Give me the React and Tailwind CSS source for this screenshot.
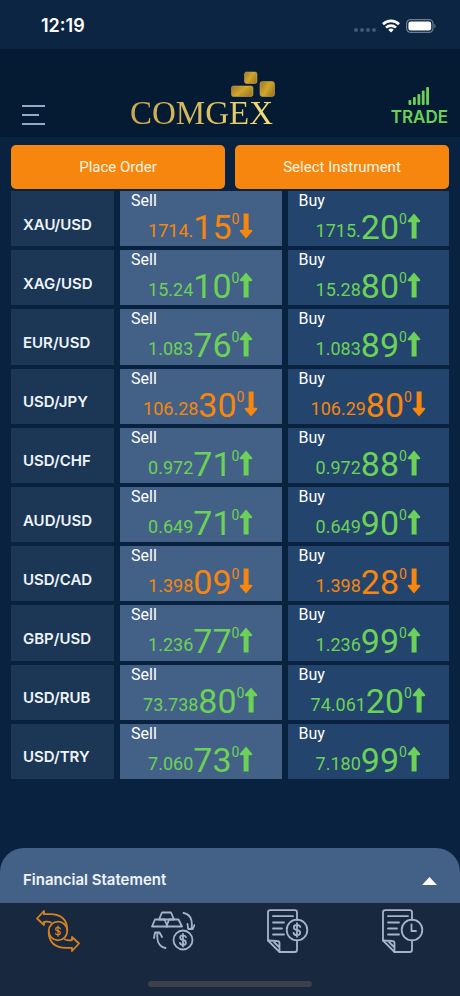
import { useState } from "react"

const quotes = [
    { pair: "XAU/USD", sell: ["1714.", "15", "down"], buy: ["1715.", "20", "up"] },
    { pair: "XAG/USD", sell: ["15.24", "10", "up"], buy: ["15.28", "80", "up"] },
    { pair: "EUR/USD", sell: ["1.083", "76", "up"], buy: ["1.083", "89", "up"] },
    { pair: "USD/JPY", sell: ["106.28", "30", "down"], buy: ["106.29", "80", "down"] },
    { pair: "USD/CHF", sell: ["0.972", "71", "up"], buy: ["0.972", "88", "up"] },
    { pair: "AUD/USD", sell: ["0.649", "71", "up"], buy: ["0.649", "90", "up"] },
    { pair: "USD/CAD", sell: ["1.398", "09", "down"], buy: ["1.398", "28", "down"] },
    { pair: "GBP/USD", sell: ["1.236", "77", "up"], buy: ["1.236", "99", "up"] },
    { pair: "USD/RUB", sell: ["73.738", "80", "up"], buy: ["74.061", "20", "up"] },
    { pair: "USD/TRY", sell: ["7.060", "73", "up"], buy: ["7.180", "99", "up"] },
]

function StatusBar() {
    return (
        <div className="flex h-[49px] items-center justify-between bg-[#0c2542] pt-[2px] pr-6 pl-[41px] text-white">
            <span className="font-['Inter',sans-serif] text-lg leading-6 font-semibold">12:19</span>
            <div className="flex items-center gap-[6px]">
                <svg className="mt-2 h-1 w-[22px] fill-[#44597a]" viewBox="0 0 22 4">
                    <circle cx="2" cy="2" r="2" />
                    <circle cx="8" cy="2" r="2" />
                    <circle cx="14" cy="2" r="2" />
                    <circle cx="20" cy="2" r="2" />
                </svg>
                <svg className="h-[14px] w-[18px]" viewBox="0 0 18 14" fill="none" stroke="white" strokeWidth="2.6">
                    <path d="M1 5.2a11.4 11.4 0 0 1 16 0" />
                    <path d="M4 8.6a7.2 7.2 0 0 1 10 0" />
                    <path d="M9 13.6 6.3 10.8a4 4 0 0 1 5.4 0Z" fill="white" stroke="none" />
                </svg>
                <svg className="h-[14px] w-[30px]" viewBox="0 0 30 14" fill="none">
                    <rect x="0.6" y="0.6" width="26.4" height="12.8" rx="4" stroke="#6d7d92" strokeWidth="1.2" />
                    <rect x="2.4" y="2.4" width="22.8" height="9.2" rx="2.4" fill="white" />
                    <path d="M28.4 4.8c1.6.7 1.6 3.7 0 4.4Z" fill="#6d7d92" />
                </svg>
            </div>
        </div>
    )
}

function Logo() {
    return (
        <div className="flex flex-col items-end justify-self-start">
            <svg className="-mr-[2px] h-[26px] w-11" viewBox="0 0 44 26">
                <defs>
                    <linearGradient id="gold" x1="0" y1="0" x2="1" y2="0.6">
                        <stop offset="0" stopColor="#9c7426" />
                        <stop offset="0.55" stopColor="#d0a62c" />
                        <stop offset="1" stopColor="#a87f22" />
                    </linearGradient>
                </defs>
                <g fill="url(#gold)" stroke="#d5b455" strokeWidth="0.5">
                    <rect x="13.5" y="1" width="12.5" height="11.5" rx="2" />
                    <rect x="0.5" y="15" width="21.5" height="10.5" rx="2" />
                    <rect x="29" y="10.5" width="14.5" height="15" rx="2.5" />
                </g>
            </svg>
            <h1 className="bg-linear-to-r from-[#c9a750] via-[#d9bd5c] to-[#f3e07a] bg-clip-text font-['Liberation_Serif',serif] text-[33px] leading-8 text-transparent">
                COMGEX
            </h1>
        </div>
    )
}

function Header() {
    return (
        <header className="grid h-[88px] grid-cols-[118px_1fr_auto] items-end bg-[#051b33] px-3 pb-2">
            <button aria-label="Menu" className="mb-[3px] ml-[10px] w-6">
                <svg className="h-[22px] w-6" viewBox="0 0 24 22" stroke="#96a8c6" strokeWidth="2">
                    <path d="M0 2h23M0 11h17M0 20h23" />
                </svg>
            </button>
            <Logo />
            <div className="flex flex-col items-center text-[#6cd158]">
                <svg className="h-[18px] w-[22px] fill-current" viewBox="0 0 22 18">
                    <rect x="0.5" y="13" width="2.8" height="5" rx="1" />
                    <rect x="5" y="10" width="2.8" height="8" rx="1" />
                    <rect x="9.5" y="7" width="2.8" height="11" rx="1" />
                    <rect x="13.8" y="3.5" width="2.8" height="14.5" rx="1" />
                    <rect x="18.2" y="0" width="2.8" height="18" rx="1" />
                </svg>
                <span className="font-['Inter',sans-serif] text-[17px] leading-6 font-semibold">TRADE</span>
            </div>
        </header>
    )
}

function Arrow({ direction }) {
    return (
        <svg className="mb-1 h-[26px] w-[14px] fill-current" viewBox="0 0 14 26">
            {direction === "up" ? (
                <path d="M7 .5 13 7.6c.6.8.2 1.6-.8 1.6H9.6V25.5H4.6V9.2H1.8C.8 9.2.4 8.4 1 7.6Z" />
            ) : (
                <path d="M7 25.5 13 18.4c.6-.8.2-1.6-.8-1.6H9.6V.5H4.6v16.3H1.8c-1 0-1.4.8-.8 1.6Z" />
            )}
        </svg>
    )
}

function PriceCell({ label, price, className }) {
    const [base, pips, direction] = price
    return (
        <td className={`flex flex-col ${className}`}>
            <span className="pl-[11px] text-base leading-5 text-white">{label}</span>
            <div
                className={`flex items-end justify-center ${direction === "up" ? "text-[#6cd158]" : "text-[#f6860e]"}`}
            >
                <span className="text-lg leading-6">{base}</span>
                <span className="text-[34px] leading-8">{pips}</span>
                <span className="self-start text-sm leading-4">0</span>
                <Arrow direction={direction} />
            </div>
        </td>
    )
}

function QuotesTable() {
    return (
        <table className="block font-['Roboto',sans-serif]">
            <tbody className="grid min-h-[588px] auto-rows-fr gap-1">
                {quotes.map((quote) => (
                    <tr key={quote.pair} className="grid grid-cols-[103px_1fr_1fr] gap-x-[6px]">
                        <th
                            scope="row"
                            className="flex items-center bg-[#1c3655] pt-4 pb-1 pl-3 font-['Inter',sans-serif] text-[15px] leading-5 font-semibold text-[#eef4fb]"
                        >
                            {quote.pair}
                        </th>
                        <PriceCell label="Sell" price={quote.sell} className="bg-[#436186]" />
                        <PriceCell label="Buy" price={quote.buy} className="bg-[#23456d]" />
                    </tr>
                ))}
            </tbody>
        </table>
    )
}

function ExchangeIcon() {
    return (
        <svg className="h-[42px] w-11" viewBox="0 0 44 42" fill="none" stroke="currentColor" strokeWidth="1.8" strokeLinejoin="round" strokeLinecap="round">
            <circle cx="22" cy="21" r="9.3" />
            <path d="M15 12.5c-2.500-1-4.500-1-7-.5v3L1 8.500 8 1v3.200h5C24 4 31 9 31.300 20" />
            <path d="M29 29.500c2.500 1 4.500 1 7 .5v-3l7 6.500L36 41v-3.200h-5C20 38 13 33 12.700 22" />
            <path d="M24.300 18.800c-.4-1.100-1.200-1.500-2.300-1.500-3 0-3 3.400 0 3.700s3 3.900 0 3.900c-1.200 0-2.100-.5-2.400-1.600M22 16v10.200" strokeWidth="1.300" />
        </svg>
    )
}

function BullionIcon() {
    return (
        <svg className="h-[42px] w-11" viewBox="0 0 44 42" fill="none" stroke="currentColor" strokeWidth="1.8" strokeLinejoin="round" strokeLinecap="round">
            <path d="M11 2.500h9l3 7H8Z" />
            <path d="M4 9.500h9.500L16.500 16.500H1Z" />
            <path d="M18 9.500h9.500L31 16.500H15.500Z" />
            <path d="M32.500 3c6.500 1 9.500 6.500 8 15.500M36.500 14l.7 5h4.600l1.700-4" />
            <path d="M14.500 38C8.500 37 5.500 31.500 6.500 23M3 28l1-5.500h4.500l2.500 4.500" />
            <circle cx="32" cy="30" r="9.500" />
            <path d="M35 27.200c-.4-1.300-1.500-1.900-3-1.900-3.800 0-3.800 4.200 0 4.700s3.800 4.900 0 4.900c-1.600 0-2.800-.7-3.100-2.100M32 23.800v12.600" />
        </svg>
    )
}

function DocumentIcon({ children }) {
    return (
        <svg className="h-11 w-[42px]" viewBox="0 0 42 44" fill="none" stroke="currentColor" strokeWidth="1.8" strokeLinejoin="round" strokeLinecap="round">
            <path d="M30 11V3.500c0-1.500-.8-2.300-2.300-2.300H3.200C1.800 1.200 1 2 1 3.500v28L12.500 43h15.200c1.500 0 2.300-.8 2.300-2.300V31.500" />
            <path d="M1 31.500l9 .5c1.700 0 2.500.8 2.500 2.300V43M6.500 32.500l6 6" />
            <path d="M6 7.200h20M6 13.500h11M6 19.500h9M6 25.500h11" />
            <circle cx="30" cy="21" r="10.300" />
            {children}
        </svg>
    )
}

function BottomNav() {
    const [active, setActive] = useState("Trade")
    const tabs = [
        { name: "Trade", icon: <ExchangeIcon /> },
        { name: "Bullion", icon: <BullionIcon /> },
        {
            name: "Statement",
            icon: (
                <DocumentIcon>
                    <path d="M33.300 18c-.5-1.400-1.600-2-3.300-2-4.200 0-4.200 4.500 0 5s4.200 5.200 0 5.200c-1.800 0-3.100-.7-3.400-2.200M30 14.200v13.600" />
                </DocumentIcon>
            ),
        },
        {
            name: "History",
            icon: (
                <DocumentIcon>
                    <path d="M29.500 15.500V22H34" />
                </DocumentIcon>
            ),
        },
    ]

    return (
        <nav className="flex h-[93px] flex-col justify-between bg-[#18293f] pt-[6px] pb-[9px]">
            <div className="grid grid-cols-4">
                {tabs.map((tab) => (
                    <button
                        key={tab.name}
                        aria-label={tab.name}
                        onClick={() => setActive(tab.name)}
                        className={`flex h-11 items-center justify-center ${active === tab.name ? "text-[#d5821f]" : "text-[#a5b4ca]"}`}
                    >
                        {tab.icon}
                    </button>
                ))}
            </div>
            <div className="mx-auto h-[6px] w-[164px] rounded-full bg-[#3c4049]"></div>
        </nav>
    )
}

export default function App() {
    return (
        <div className="flex min-h-screen flex-col bg-[#09223f]">
            <StatusBar />
            <Header />
            <main className="flex-1 px-[11px] pt-2 pb-6">
                <div className="mb-[2px] grid grid-cols-2 gap-[10px] font-['Roboto',sans-serif] text-[15px] text-[#fff6e2]">
                    <button className="h-11 rounded-[5px] bg-[#f6860e]">Place Order</button>
                    <button className="h-11 rounded-[5px] bg-[#f6860e]">Select Instrument</button>
                </div>
                <QuotesTable />
            </main>
            <button className="flex h-[55px] items-center justify-between rounded-t-[24px] bg-[#436186] px-[23px] pt-[10px] font-['Inter',sans-serif] text-[15px] font-semibold text-[#eef4fb]">
                Financial Statement
                <svg className="h-2 w-[15px] fill-white" viewBox="0 0 15 8">
                    <path d="M7.5 0 15 8H0Z" />
                </svg>
            </button>
            <BottomNav />
        </div>
    )
}
